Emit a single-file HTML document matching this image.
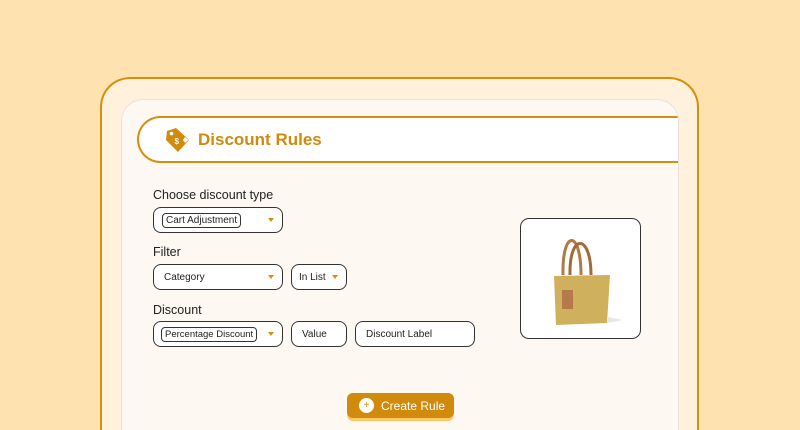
<!DOCTYPE html>
<html><head><style>
*{box-sizing:border-box;margin:0;padding:0}
html{width:800px;height:430px;overflow:hidden}
body{width:800px;height:430px;background:#fee3b0;position:relative;overflow:hidden;font-family:"Liberation Sans",sans-serif;color:#222}
.outer{position:absolute;left:100px;top:77px;width:599px;height:353px;border:2px solid #d68f0c;border-bottom:none;border-radius:30px 30px 0 0;background:#fff1dc}
.inner{position:absolute;left:121px;top:99px;width:558px;height:331px;border:1.5px solid #ebe3d9;border-bottom:none;border-radius:22px 22px 0 0;background:#fdf8f1;overflow:hidden}
.pill{position:absolute;left:15px;top:16px;width:600px;height:47px;border:2px solid #d68f0c;border-radius:24px 0 0 24px;border-right:none;background:#fff}
.title{position:absolute;left:59px;top:12px;font-size:17px;font-weight:bold;color:#d08a0c}
.lbl{position:absolute;font-size:12.5px;color:#222}
.f{position:absolute;height:26px;border:1.3px solid #333;border-radius:8px;background:#fff;font-size:10px;display:flex;align-items:center;padding-left:8px}
.f.chip span{border:1px solid #333;border-radius:4px;padding:1px 3px}
.f.plain{padding-left:10px}
.arr{position:absolute;right:8px;top:10px;width:0;height:0;border-left:3.5px solid transparent;border-right:3.5px solid transparent;border-top:4px solid #d68f0c}
.img{position:absolute;left:398px;top:118px;width:121px;height:121px;border:1.3px solid #333;border-radius:9px;background:#fff}
.btn{position:absolute;left:225px;top:293px;width:107px;height:28px;border-radius:6px;background:#ffc766}
.btn div{height:25px;border-radius:6px;background:#d08a0c;color:#fff;font-size:12px;display:flex;align-items:center;padding-left:12px}
.plus{width:15px;height:15px;border-radius:50%;background:#fff;color:#d08a0c;font-size:10px;display:flex;align-items:center;justify-content:center;margin-right:7px}
</style></head><body>
<div class="outer"></div>
<div class="inner">
 <div class="pill">
  <svg style="position:absolute;left:25px;top:8px" width="28" height="28" viewBox="0 0 28 28"><path d="M3 5 L12 2 L25 14 L14 26 L2 14 Z" fill="#d08a0c"/><circle cx="7.5" cy="7.5" r="1.8" fill="#fff"/><text x="10.5" y="18" font-size="8" fill="#fff" font-family="Liberation Sans" font-weight="bold">$</text><path d="M21 11 L24.5 14 L21 17 L19 14Z" fill="#fff"/></svg>
  <div class="title">Discount Rules</div>
 </div>
 <div class="lbl" style="left:31px;top:88px">Choose discount type</div>
 <div class="f chip" style="left:31px;top:107px;width:130px"><span>Cart Adjustment</span><i class="arr"></i></div>
 <div class="lbl" style="left:31px;top:145px">Filter</div>
 <div class="f plain" style="left:31px;top:164px;width:130px">Category<i class="arr"></i></div>
 <div class="f plain" style="left:169px;top:164px;width:56px;padding-left:7px">In List<i class="arr"></i></div>
 <div class="lbl" style="left:31px;top:203px">Discount</div>
 <div class="f chip" style="left:31px;top:221px;width:130px;font-size:9.5px;padding-left:7px"><span>Percentage Discount</span><i class="arr"></i></div>
 <div class="f plain" style="left:169px;top:221px;width:56px">Value</div>
 <div class="f plain" style="left:233px;top:221px;width:120px">Discount Label</div>
 <div class="img">
  <svg width="121" height="121" viewBox="0 0 121 121">
   <path d="M42 56 C41 10 60 10 60 56" stroke="#b07a45" stroke-width="3" fill="none"/>
   <path d="M49 56 C48 14 70 14 70 56" stroke="#a06a3a" stroke-width="3" fill="none"/>
   <path d="M33 57 L89 56 L86 104 L35 106 Z" fill="#cfb05c"/>
   <rect x="41" y="71" width="11" height="19" fill="#b57a4a"/>
   <path d="M86 104 L102 101 L86 98Z" fill="#e6e6e6"/>
  </svg>
 </div>
 <div class="btn"><div><span class="plus">+</span>Create Rule</div></div>
</div>
</body></html>
